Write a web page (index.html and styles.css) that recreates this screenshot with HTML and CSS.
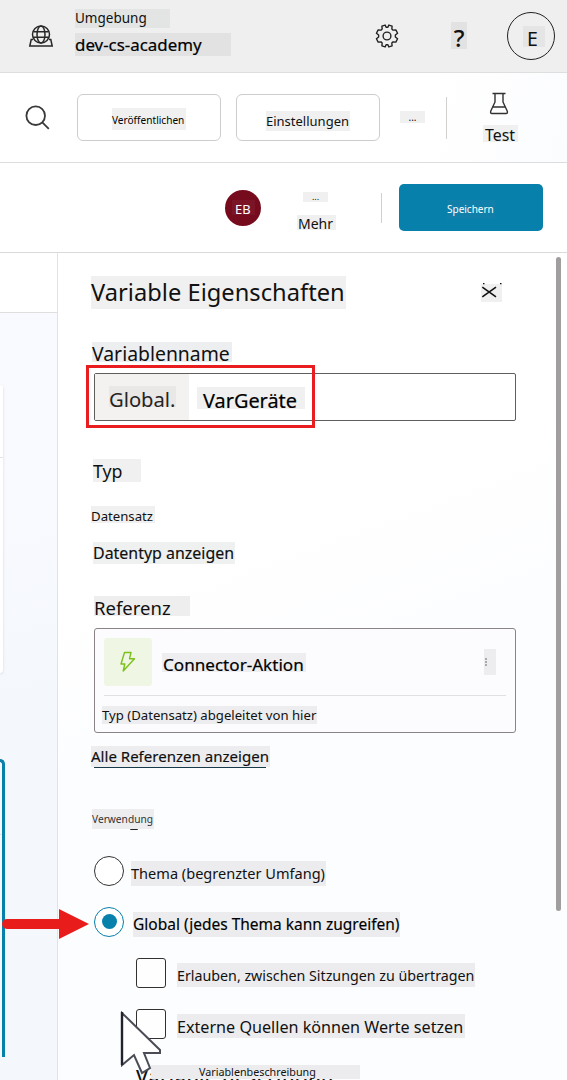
FILE: index.html
```html
<!DOCTYPE html>
<html lang="de">
<head>
<meta charset="utf-8">
<title>Variable Eigenschaften</title>
<link rel="stylesheet" href="styles.css">
</head>
<body>
<header class="topbar">
  <svg class="env-icon" width="26" height="24" viewBox="0 0 26 24" fill="none" stroke="#292827" stroke-width="1.5">
    <circle cx="13" cy="10.500" r="8.500"/><ellipse cx="13" cy="10.500" rx="4" ry="8.500"/><path d="M5.200 7.700h15.600M5.200 13.300h15.600M5 15.500H3.200L1.800 22h22.400L22.800 15.500H21"/>
  </svg>
  <div class="env">
    <span class="tag env-label">Umgebung</span>
    <span class="tag env-name">dev-cs-academy</span>
  </div>
  <svg class="gear" width="26" height="26" viewBox="-1 -1 28 28" fill="none" stroke="#222" stroke-width="1.5" stroke-linejoin="round">
    <path d="M11 1.2L12 3.600h2L15 1.2l3.500 1.200-.3 3 1.300 1.300 3-.3L24.400 10l-2.400 2v2l2.400 2-1.900 3.600-3-.3-1.300 1.300.3 3-3.500 1.200-1-2.400h-2l-1 2.400-3.500-1.200.3-3-1.300-1.300-3 .3L1.600 16 4 14v-2l-2.400-2 1.900-3.600 3 .3 1.300-1.300-.3-3z"/><circle cx="13" cy="13" r="4.200"/>
  </svg>
  <span class="tag help">?</span>
  <div class="account"><span class="tag account-letter">E</span></div>
</header>

<nav class="toolbar">
  <svg class="search" width="26" height="26" viewBox="0 0 26 26" fill="none" stroke="#3b3a39" stroke-width="1.8"><circle cx="10.7" cy="10.7" r="9.3"/><path d="M17.3 17.3l6.500 6.500"/></svg>
  <div class="button publish"><span class="tag publish-text">Veröffentlichen</span></div>
  <div class="button settings"><span class="tag settings-text">Einstellungen</span></div>
  <span class="tag more-dots">...</span>
  <i class="rule rule-tall"></i>
  <div class="test">
    <svg width="20" height="23" viewBox="0 0 20 23" fill="none" stroke="#323130" stroke-width="1.4" stroke-linejoin="round"><path d="M3.500 1.500h13M6 1.500v8.500L1.800 19Q1 21.500 3 21.500h14q2 0 1.200-2.500L14 10V1.500M4 15h12"/></svg>
    <span class="tag test-text">Test</span>
  </div>
</nav>

<div class="actions">
  <div class="initials"><span class="tag initials-text">EB</span></div>
  <div class="more"><span class="tag more-top">...</span><span class="tag more-text">Mehr</span></div>
  <i class="rule"></i>
  <div class="save"><span class="tag save-text">Speichern</span></div>
</div>

<main class="workspace">
  <aside class="canvas">
    <div class="canvas-head"></div>
    <div class="node"><i></i></div>
    <div class="node-active"><i></i></div>
  </aside>
  <section class="panel">
    <div class="title-row">
      <h1 class="tag title">Variable Eigenschaften</h1>
      <svg class="close" width="21" height="19" viewBox="0 0 21 19"><path fill="#f0f0f0" d="M0 1h21v18H0z"/><path d="M2 .5h1.500M19 .5h1.500M1.300 4.200L15 13.800M15 4.200L1.300 13.800" fill="none" stroke="#111" stroke-width="1.600"/></svg>
    </div>
    <label class="tag name-label">Variablenname</label>
    <div class="field">
      <div class="prefix"><span class="tag prefix-text">Global.</span></div>
      <span class="tag value">VarGeräte</span>
      <div class="highlight"></div>
    </div>
    <span class="tag type-label">Typ</span>
    <span class="tag type-value">Datensatz</span>
    <span class="tag type-link">Datentyp anzeigen</span>
    <span class="tag ref-label">Referenz</span>
    <article class="card">
      <div class="card-head">
        <div class="bolt"><svg width="16" height="22" viewBox="0 0 16 22" fill="none" stroke="#7cc01c" stroke-width="1.400" stroke-linejoin="round"><path d="M4.500 1.500h6.500L9.500 7.700h5L3.200 20l1.600-7H1z"/></svg></div>
        <span class="tag connector">Connector-Aktion</span>
        <svg class="kebab" width="12" height="26" viewBox="0 0 12 26"><path d="M0 0h12v26H0z" fill="#ededef"/><path d="M1 9h2v2H1zm0 3h2v2H1zm0 3h2v2H1z" fill="#aaa"/></svg>
      </div>
      <span class="tag derived">Typ (Datensatz) abgeleitet von hier</span>
    </article>
    <div class="all-refs"><a class="tag all-text">Alle Referenzen anzeigen</a></div>
    <div class="usage"><span class="tag usage-text">Verwendung</span></div>
    <div class="option topic"><i class="radio"></i><span class="tag topic-text">Thema (begrenzter Umfang)</span></div>
    <div class="option global"><i class="radio checked"></i><span class="tag global-text">Global (jedes Thema kann zugreifen)</span></div>
    <div class="option sub"><i class="checkbox"></i><span class="tag carry-text">Erlauben, zwischen Sitzungen zu übertragen</span></div>
    <div class="option sub sub-last"><i class="checkbox"></i><span class="tag extern-text">Externe Quellen können Werte setzen</span></div>
    <div class="description"><span class="description-under">Variable description ...</span><span class="tag description-text">Variablenbeschreibung</span></div>
    <div class="scrollbar"></div>
  </section>
</main>

<svg class="arrow" width="88" height="30" viewBox="0 0 88 30"><path d="M5 15h54" stroke="#e91c1c" stroke-width="9.800" stroke-linecap="round"/><path d="M57 0l30 15-30 15z" fill="#e91c1c"/></svg>
<svg class="cursor" width="44" height="68" viewBox="0 0 44 68"><path d="M2 3v52l12-10 8 18 8-5-6-15h16v-3z" fill="#fff" stroke="#4b4c56" stroke-width="2"/><path d="M2 2v53" stroke="#20222c" stroke-width="2.400"/></svg>
</body>
</html>
```
FILE: styles.css
```css
* { box-sizing: border-box; }
body {
  position: relative;
  margin: 0;
  width: 567px;
  height: 1080px;
  overflow: hidden;
  background: #fff;
  color: #111;
  font-family: "Noto Sans", sans-serif;
}
svg { display: block; flex: none; }
i { display: block; flex: none; }
.tag {
  display: block;
  flex: none;
  margin: 0;
  font-weight: 400;
  white-space: nowrap;
  background: #f0f0f0;
}

/* Top bar */
.topbar {
  display: flex;
  align-items: flex-start;
  height: 73px;
  padding-left: 28px;
  background: #efefef;
  border-bottom: 1px solid #dedede;
}
.env-icon { margin-top: 24px; }
.env { margin: 9px 0 0 21px; width: 156px; }
.env-label { width: 95px; height: 19px; font-size: 13.5px; line-height: 19px; background: #e3e5e4; }
.env-name { margin-top: 5px; width: 156px; height: 23px; font-size: 16.9px; line-height: 23px; color: #000; background: #e2e2e2; -webkit-text-stroke: .2px #000; }
.gear { margin: 23px 0 0 143px; }
.help { margin: 22px 0 0 51px; width: 16px; height: 27px; font-size: 24px; line-height: 31px; text-align: center; font-weight: 500; background: #e2e2e2; }
.account { margin: 12px 0 0 40px; width: 48px; height: 48px; padding: 13px 0 0 15px; border: 1px solid #222; border-radius: 50%; }
.account-letter { width: 22px; height: 21px; font-size: 19.5px; line-height: 25px; padding-left: 4px; background: #e5e5e5; }

/* Toolbar */
.toolbar { display: flex; align-items: flex-start; height: 90px; padding-left: 25px; border-bottom: 1px solid #dddde0; background: linear-gradient(100deg, #fff 75%, #fbfcfe); }
.search { margin-top: 32px; }
.button { margin-top: 21px; width: 144px; height: 47px; border: 1px solid #cfcdcc; border-radius: 6px; background: #fff; }
.publish { margin-left: 26px; padding: 13px 0 0 34px; }
.publish-text { width: 74px; height: 22px; font-size: 10.1px; line-height: 24px; color: #000; }
.settings { margin-left: 15px; padding: 16px 0 0 29px; }
.settings-text { width: 84px; height: 20px; font-size: 13px; line-height: 20px; }
.more-dots { margin: 38px 0 0 20px; width: 25px; height: 12px; font-size: 10px; line-height: 13px; text-align: center; }
.rule { width: 1px; height: 30px; background: #d2d0ce; }
.rule-tall { margin: 24px 0 0 21px; height: 42px; }
.test { margin: 19px 0 0 36px; }
.test svg { margin-left: 6px; }
.test-text { margin-top: 10px; width: 35px; height: 17px; padding-left: 2px; font-size: 15.9px; line-height: 21px; }

/* Action row */
.actions { display: flex; align-items: flex-start; height: 90px; padding-left: 225px; border-bottom: 1px solid #dadadd; }
.initials { margin-top: 27px; width: 36px; height: 36px; padding: 10px 0 0 7px; border-radius: 50%; background: #750b1c; }
.initials-text { width: 23px; height: 15px; padding-left: 3px; font-size: 12.9px; line-height: 18px; color: #fff; background: #7b1427; }
.more { margin: 29px 0 0 36px; width: 39px; }
.more-top { margin-left: 6px; width: 25px; height: 10px; font-size: 9px; line-height: 10px; text-align: center; }
.more-text { margin-top: 13px; width: 39px; height: 15px; padding-left: 1px; font-size: 14px; line-height: 18px; }
.actions .rule { margin: 30px 0 0 45px; }
.save { margin: 21px 0 0 17px; width: 144px; height: 47px; padding: 16px 0 0 48px; border-radius: 5px; background: #0780ac; }
.save-text { width: 48px; height: 19px; font-size: 10px; line-height: 18px; color: #fff; background: #1080ab; }

/* Workspace */
.workspace { display: flex; height: 827px; }
.canvas { width: 57px; background: linear-gradient(170deg, #f9faff 25%, #f4f8fc 55%); overflow: hidden; }
.canvas-head { height: 60px; background: #fff; border-bottom: 1px solid #e0dedd; }
.node { margin-top: 72px; width: 3px; height: 288px; padding-top: 72px; border-radius: 0 6px 6px 0; background: #fff; box-shadow: 0 1px 3px #0002; }
.node i, .node-active i { height: 1px; background: #e4e4e6; }
.node-active { margin-top: 86px; width: 5px; height: 298px; padding-top: 72px; border: solid #0780ac; border-width: 3px 3px 0 0; border-top-right-radius: 7px; background: #f4f9fc; }
.panel {
  position: relative;
  width: 510px;
  padding-left: 33px;
  border-left: 1px solid #e3e2e3;
  background: linear-gradient(160deg, #fff 35%, #fcfdff 52%);
}
.title-row { display: flex; padding-top: 23px; height: 56px; }
.title { width: 255px; height: 33px; font-size: 23.65px; line-height: 33px; letter-spacing: .03px; }
.close { margin: 7px 0 0 135px; }
.name-label { margin: 33px 0 0 1px; width: 140px; height: 20px; font-size: 19.4px; line-height: 24px; background: #edeeef; }
.field { position: relative; display: flex; margin: 11px 0 0 3px; width: 422px; height: 48px; border: 1px solid #605e5c; border-radius: 2px; background: #fff; }
.prefix { width: 94px; padding: 12px 0 0 14px; background: #f3f2f1; }
.prefix-text { width: 67px; height: 21px; font-size: 20.2px; line-height: 27px; color: #252423; background: #e9e8e7; }
.value { margin: 13px 0 0 8px; width: 108px; height: 22px; padding-left: 6px; font-size: 19.9px; line-height: 27px; color: #000; -webkit-text-stroke: .2px #000; }
.highlight { position: absolute; left: -9px; top: -9px; width: 229px; height: 63px; border: 3px solid #e91c20; }
.type-label { margin: 38px 0 0 2px; width: 48px; height: 23px; font-size: 17.8px; line-height: 24px; }
.type-value { margin-top: 24px; width: 64px; height: 17px; font-size: 13.2px; line-height: 20px; }
.type-link { margin: 19px 0 0 2px; width: 142px; height: 22px; font-size: 15.95px; line-height: 23px; background: #eff0f0; -webkit-text-stroke: .15px #000; }
.ref-label { margin: 32px 0 0 3px; width: 96px; height: 20px; font-size: 18.5px; line-height: 24px; background: #eee; }
.card { margin: 12px 0 0 3px; width: 422px; height: 105px; border: 1px solid #8a8488; border-radius: 3px; background: #fcfcfe; }
.card-head { display: flex; align-items: flex-start; margin: 0 9px; padding-top: 9px; height: 67px; border-bottom: 1px solid #e0dfe1; }
.bolt { width: 48px; height: 48px; padding: 13px 0 0 16px; background: #f0f6e4; border-radius: 3px; }
.connector { margin: 15px 0 0 10px; width: 144px; height: 19px; padding-left: 1px; font-size: 17.1px; line-height: 23px; color: #000; background: #eeeef0; -webkit-text-stroke: .2px #000; }
.kebab { margin: 11px 0 0 178px; }
.derived { margin: 10px 0 0 7px; width: 215px; height: 18px; font-size: 13.15px; line-height: 18px; background: #ededef; }
.all-refs { margin-top: 13px; width: 179px; height: 22px; }
.all-text { height: 21px; font-size: 15.05px; line-height: 21px; background: #ededef; -webkit-text-stroke: .15px #000; }
.all-refs::after { content: ""; display: block; margin-left: 3px; width: 172px; height: 1px; background: #173b4b; }
.usage { margin: 41px 0 0 1px; width: 62px; height: 22px; }
.usage-text { height: 20px; font-size: 10.2px; line-height: 21px; color: #333; background: #ededef; }
.usage::after { content: ""; display: block; margin: 0 0 0 38px; width: 8px; height: 1px; border-radius: 0 0 4px 4px; background: #222; }

/* Options */
.option { display: flex; align-items: flex-start; margin-left: 3px; height: 30px; }
.topic { margin-top: 25px; }
.global { margin-top: 21px; }
.sub { margin: 21px 0 0 45px; }
.radio { width: 30px; height: 30px; border: 1px solid #333; border-radius: 50%; background: #fff; }
.radio.checked { padding: 6px 7px; border-color: #0780ac; }
.radio.checked::after { content: ""; display: block; width: 15px; height: 15px; border-radius: 50%; background: #0780ac; }
.checkbox { width: 30px; height: 30px; border: 1px solid #323130; border-radius: 3px; background: #fefeff; }
.option .tag { background: #ececee; }
.topic-text { margin: 5px 0 0 7px; width: 195px; height: 25px; font-size: 14.55px; line-height: 25px; }
.option .global-text { margin: 5px 0 0 9px; width: 267px; height: 25px; font-size: 15.5px; line-height: 25px; color: #000; -webkit-text-stroke: .15px #000; }
.carry-text { margin: 5px 0 0 11px; width: 298px; height: 24px; font-size: 14.25px; line-height: 25px; }
.extern-text { margin: 5px 0 0 11px; width: 288px; height: 24px; font-size: 16.15px; line-height: 26px; }
.description { position: relative; margin: 26px 0 0 60px; width: 209px; height: 15px; }
.description-text { position: relative; width: 209px; height: 14px; padding-left: 48px; font-size: 10.75px; line-height: 14px; background: #ececee; }
.description-under { position: absolute; left: -15px; top: -2px; font-size: 19.5px; line-height: 28px; font-weight: 500; letter-spacing: .6px; white-space: nowrap; }
.scrollbar { position: absolute; right: 6px; top: 4px; width: 5px; height: 654px; border-radius: 3px; background: #a09e9e; }

/* Annotations */
.arrow { position: absolute; left: 2px; top: 909px; }
.cursor { position: absolute; left: 120px; top: 1010px; }
```
